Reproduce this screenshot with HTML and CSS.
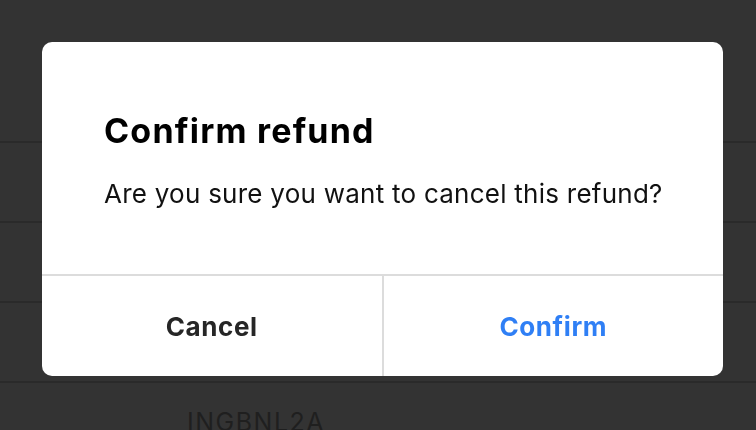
FILE: index.html
```html
<!DOCTYPE html>
<html>
<head>
<meta charset="utf-8">
<link rel="stylesheet" href="styles.css">
</head>
<body>
<div class="list">
  <div class="row"></div>
  <div class="row"></div>
  <div class="row"></div>
  <div class="row"></div>
  <div class="row last"><span class="code">INGBNL2A</span></div>
</div>
<div class="modal">
  <div class="content">
    <h1 class="title">Confirm refund</h1>
    <p class="message">Are you sure you want to cancel this refund?</p>
  </div>
  <div class="actions">
    <button class="btn cancel">Cancel</button>
    <button class="btn confirm">Confirm</button>
  </div>
</div>
</body>
</html>
```
FILE: styles.css
```css
html, body {
  margin: 0;
  padding: 0;
  background: #333333;
  height: 100%;
  overflow: hidden;
  font-family: "Inter", "Liberation Sans", sans-serif;
}
.list {
  display: flex;
  flex-direction: column;
  padding-top: 63px;
}
.row {
  height: 78px;
  border-bottom: 2px solid #2a2a2a;
  flex: none;
}
.row.last {
  border-bottom: none;
  padding-left: 187px;
  box-sizing: border-box;
}
.code {
  display: block;
  padding-top: 24px;
  font-size: 25px;
  color: #1f1f1f;
  letter-spacing: 1.5px;
}
.modal {
  position: fixed;
  left: 42px;
  top: 42px;
  width: 681px;
  height: 334px;
  background: #ffffff;
  border-radius: 10px;
  display: flex;
  flex-direction: column;
  overflow: hidden;
}
.content {
  height: 232px;
  box-sizing: border-box;
  padding: 69px 40px 0 62px;
}
.title {
  margin: 0;
  font-size: 34px;
  font-weight: 700;
  line-height: 40px;
  letter-spacing: 1.2px;
  color: #000;
}
.message {
  margin: 27px 0 0;
  font-size: 26px;
  line-height: 32px;
  letter-spacing: 0.25px;
  color: #111;
  white-space: nowrap;
}
.actions {
  flex: 1;
  display: flex;
  border-top: 2px solid #dcdcdc;
}
.btn {
  flex: 1;
  background: none;
  border: none;
  font-family: inherit;
  font-size: 26px;
  font-weight: 700;
  letter-spacing: 0.6px;
  padding: 0;
  margin: 0;
}
.cancel {
  color: #262626;
  border-right: 2px solid #dcdcdc;
}
.confirm {
  color: #2f7ff5;
}
```
